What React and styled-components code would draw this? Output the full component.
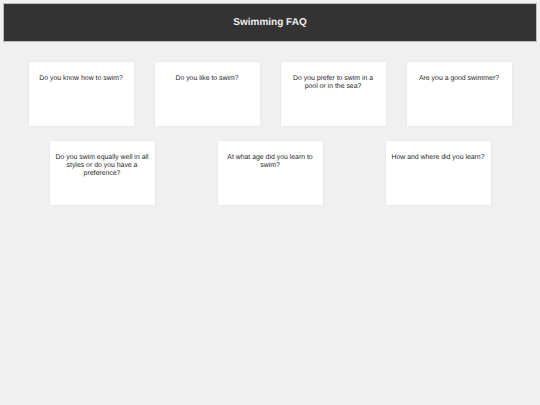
import React from 'react'
import styled, { createGlobalStyle } from 'styled-components'

const GlobalStyle = createGlobalStyle`
    html, body {
        margin: 0;
        padding: 0;
        background: #f0f0f0;
        font-family: "Liberation Sans", Arial, sans-serif;
        text-rendering: geometricPrecision;
    }
`

const Header = styled.header`
    margin: 3px 3px 0;
    height: 37px;
    background: #333333;
    border: 1px solid #bdbdbd;
    display: flex;
    align-items: center;
    justify-content: center;
`

const Title = styled.h1`
    margin: 0;
    font-size: 10px;
    font-weight: bold;
    color: #efefef;
`

const Grid = styled.div`
    padding: 20px 18px;
    display: flex;
    flex-wrap: wrap;
    justify-content: space-around;
    row-gap: 15px;
`

const Card = styled.div`
    width: 105px;
    height: 64px;
    margin: 0 10px;
    box-sizing: border-box;
    padding: 13px 5.5px;
    background: #ffffff;
    box-shadow: 0 0 1px rgba(0, 0, 0, 0.12);
`

const Question = styled.p`
    margin: 0;
    font-size: 6.9px;
    line-height: 8px;
    text-align: center;
    color: #262626;
`

const questions = [
    'Do you know how to swim?',
    'Do you like to swim?',
    'Do you prefer to swim in a pool or in the sea?',
    'Are you a good swimmer?',
    'Do you swim equally well in all styles or do you have a preference?',
    'At what age did you learn to swim?',
    'How and where did you learn?',
]

const App = () => {
    return (
        <>
            <GlobalStyle />
            <Header>
                <Title>Swimming FAQ</Title>
            </Header>
            <Grid>
                {questions.map((q) => (
                    <Card key={q}>
                        <Question>{q}</Question>
                    </Card>
                ))}
            </Grid>
        </>
    )
}

export default App
